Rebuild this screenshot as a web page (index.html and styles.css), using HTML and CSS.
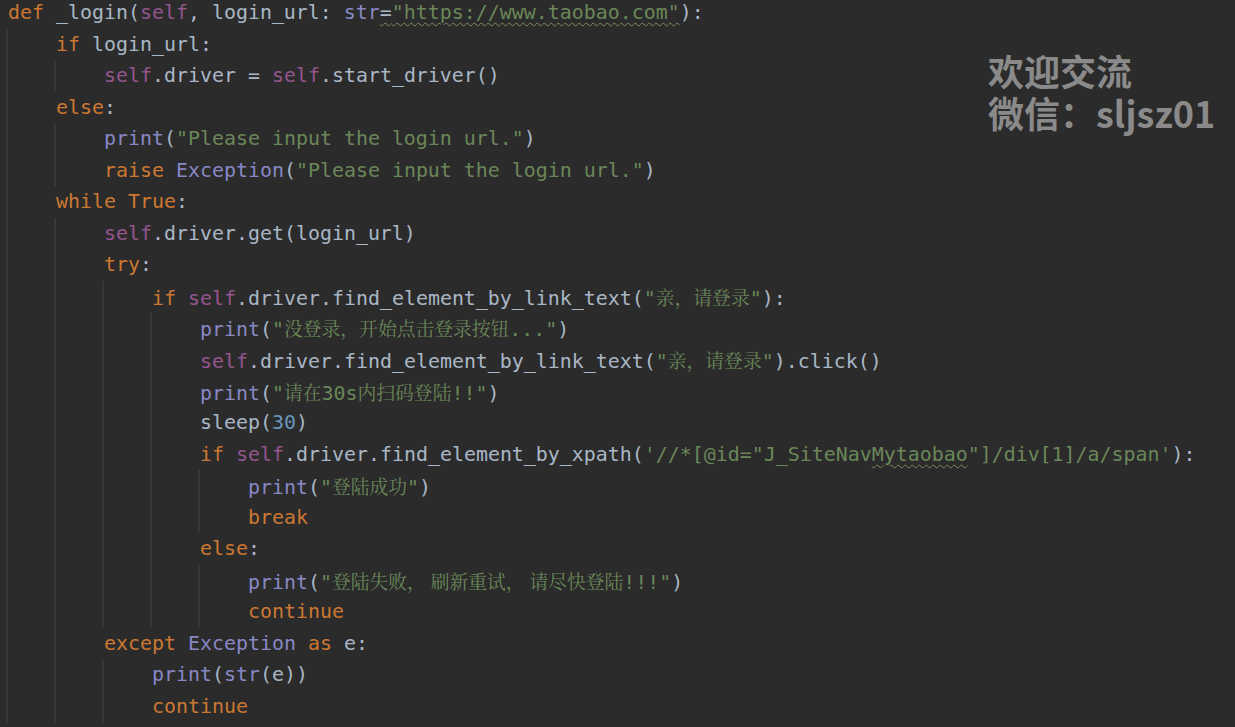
FILE: index.html
```html
<!DOCTYPE html>
<html lang="zh">
<head>
<meta charset="utf-8">
<title>_login</title>
<link rel="stylesheet" href="styles.css">
</head>
<body>
<div class="editor">
  <div class="code">
    <div class="l"><span class="k">def</span> _login(<span class="sf">self</span>, login_url: <span class="b">str</span><span class="warn">=<span class="st">"https://www.taobao.com"</span></span>):</div>
    <div class="blk">
      <div class="l"><span class="k">if</span> login_url:</div>
      <div class="blk">
        <div class="l"><span class="sf">self</span>.driver = <span class="sf">self</span>.start_driver()</div>
      </div>
      <div class="l"><span class="k">else</span>:</div>
      <div class="blk">
        <div class="l"><span class="b">print</span>(<span class="st">"Please input the login url."</span>)</div>
        <div class="l"><span class="k">raise</span> <span class="b">Exception</span>(<span class="st">"Please input the login url."</span>)</div>
      </div>
      <div class="l"><span class="k">while</span> <span class="k">True</span>:</div>
      <div class="blk">
        <div class="l"><span class="sf">self</span>.driver.get(login_url)</div>
        <div class="l"><span class="k">try</span>:</div>
        <div class="blk">
          <div class="l"><span class="k">if</span> <span class="sf">self</span>.driver.find_element_by_link_text(<span class="st">"<span class="c">亲，请登录</span>"</span>):</div>
          <div class="blk">
            <div class="l"><span class="b">print</span>(<span class="st">"<span class="c">没登录，开始点击登录按钮</span>..."</span>)</div>
            <div class="l"><span class="sf">self</span>.driver.find_element_by_link_text(<span class="st">"<span class="c">亲，请登录</span>"</span>).click()</div>
            <div class="l"><span class="b">print</span>(<span class="st">"<span class="c">请在</span>30s<span class="c">内扫码登陆</span>!!"</span>)</div>
            <div class="l">sleep(<span class="n">30</span>)</div>
            <div class="l"><span class="k">if</span> <span class="sf">self</span>.driver.find_element_by_xpath(<span class="st">'//*[@id="J_SiteNav<span class="typo">Mytaobao</span>"]/div[1]/a/span'</span>):</div>
            <div class="blk">
              <div class="l"><span class="b">print</span>(<span class="st">"<span class="c">登陆成功</span>"</span>)</div>
              <div class="l"><span class="k">break</span></div>
            </div>
            <div class="l"><span class="k">else</span>:</div>
            <div class="blk">
              <div class="l"><span class="b">print</span>(<span class="st">"<span class="c">登陆失败， 刷新重试， 请尽快登陆</span>!!!"</span>)</div>
              <div class="l"><span class="k">continue</span></div>
            </div>
          </div>
        </div>
        <div class="l"><span class="k">except</span> <span class="b">Exception</span> <span class="k">as</span> e:</div>
        <div class="blk">
          <div class="l"><span class="b">print</span>(<span class="b">str</span>(e))</div>
          <div class="l"><span class="k">continue</span></div>
        </div>
      </div>
    </div>
  </div>
  <div class="watermark">
    <div class="wm-line">欢迎交流</div>
    <div class="wm-line">微信：sljsz01</div>
  </div>
</div>
</body>
</html>
```

FILE: styles.css
```css
html, body {
  margin: 0;
  padding: 0;
  background: #2b2b2b;
  overflow: hidden;
}

.editor {
  position: relative;
  width: 1235px;
  height: 727px;
  background: #2b2b2b;
}

.code {
  margin-top: -3px;
  padding-left: 8px;
  font-family: "DejaVu Sans Mono", "Liberation Mono", "Noto Sans CJK SC", monospace;
  font-size: 19.93px;
  line-height: 31.55px;
  color: #a9b7c6;
}

.l {
  white-space: pre;
  height: 31.55px;
}

.blk {
  margin-left: -2px;
  border-left: 2px solid #373737;
  padding-left: 48px;
}

.k { color: #cc7832; }
.sf { color: #94558d; }
.b { color: #8888c6; }
.st { color: #6a8759; }
.n { color: #6897bb; }

.c {
  font-family: "Noto Serif CJK SC", "Noto Sans CJK SC", serif;
  font-size: 18.8px;
}

.warn, .typo {
  text-decoration-line: underline;
  text-decoration-style: wavy;
  text-decoration-color: #7f8a5e;
  text-decoration-thickness: 1px;
  text-underline-offset: 3px;
}

.watermark {
  position: absolute;
  left: 988px;
  top: 53px;
  font-family: "Noto Sans CJK SC", sans-serif;
  font-weight: 700;
  font-size: 36px;
  color: #8a8a8a;
  display: flex;
  flex-direction: column;
  gap: 2px;
}

.wm-line {
  line-height: 40px;
  height: 40px;
}
```
